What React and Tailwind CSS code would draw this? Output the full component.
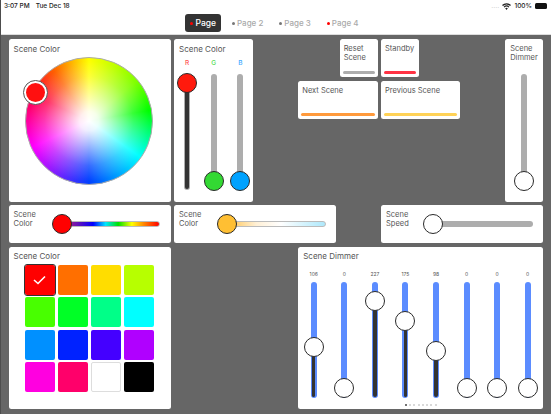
const font = "font-['Inter','Liberation_Sans',sans-serif]";

function Card({ className = "", children }) {
  return <div className={`bg-white rounded-[2.5px] text-[#555] min-w-0 ${className}`}>{children}</div>;
}

function VSlider({ fill, pos, thumb }) {
  return (
    <div className="relative h-[116px] w-[6px] rounded-full bg-[#adadad] flex justify-center">
      {fill ? <div className="absolute bottom-[1px] w-[4px] rounded-full bg-[#333]" style={{ height: 115 - pos }} /> : null}
      <div
        className="absolute left-1/2 -translate-x-1/2 -translate-y-1/2 w-[20px] h-[20px] rounded-full border-[1.5px] border-[#2a2a2a]"
        style={{ top: pos, background: thumb }}
      />
    </div>
  );
}

function HSlider({ label1, label2, track, thumb }) {
  return (
    <Card className="flex items-start pl-[5px] pr-[10.5px] pt-[4.5px]">
      <div className="w-[47px] shrink-0 text-[7.5px] leading-[9px]">
        {label1}
        <br />
        {label2}
      </div>
      <div className={`relative mt-[11.5px] flex-1 h-[6px] rounded-full ${track}`}>
        <div
          className="absolute left-[-10px] top-1/2 -translate-y-1/2 w-[20px] h-[20px] rounded-full border-[1.5px] border-[#2a2a2a]"
          style={{ background: thumb }}
        />
      </div>
    </Card>
  );
}

const swatches = [
  "#ff0000", "#ff6f00", "#ffdd00", "#b7ff00",
  "#48ff00", "#00ff26", "#00ff88", "#00ffff",
  "#0090ff", "#0022ff", "#4400ff", "#b000ff",
  "#ff00e0", "#ff006a", "#ffffff", "#000000",
];

const channels = [
  { v: 106, pos: 65 },
  { v: 0, pos: 106 },
  { v: 227, pos: 19.5 },
  { v: 175, pos: 39 },
  { v: 98, pos: 69 },
  { v: 0, pos: 106 },
  { v: 0, pos: 106 },
  { v: 0, pos: 106 },
];

function Tab({ dot, active, children }) {
  return (
    <div
      className={`flex items-center gap-[2px] h-[18px] px-[5px] rounded-[3px] font-medium ${
        active ? "bg-[#333] text-white text-[8.5px]" : "text-[#aaa] text-[8px]"
      }`}
    >
      <span className="w-[3px] h-[3px] rounded-full" style={{ background: dot }} />
      {children}
    </div>
  );
}

export default function App() {
  return (
    <div className={`w-[552px] h-[414px] overflow-hidden flex flex-col bg-[#666] border-l border-l-[#4d4d4d] border-r border-r-white ${font}`}>
      <header className="bg-white h-[35px] shrink-0 border-b border-b-[#ddd] relative flex justify-center">
        <div className="absolute left-[3px] top-[2px] flex gap-[6px] text-[6.5px] leading-[8px] font-medium text-[#222]">
          <span>3:07 PM</span>
          <span>Tue Dec 18</span>
        </div>
        <div className="absolute right-[4px] top-[2px] flex items-center gap-[3px] text-[6.5px] leading-[8px] font-medium text-[#222]">
          <span className="text-[#bbb] tracking-[0.5px] text-[5px]">....</span>
          <svg width="9" height="7" viewBox="0 0 12 9" fill="#222">
            <path d="M6 9 4.2 6.9a2.6 2.6 0 0 1 3.6 0ZM3.3 5.9 2.2 4.7a5.5 5.5 0 0 1 7.6 0L8.7 5.9a4 4 0 0 0-5.4 0ZM1.3 3.9 0 2.6a8.6 8.6 0 0 1 12 0l-1.3 1.3a7 7 0 0 0-9.4 0Z" />
          </svg>
          <span>100%</span>
          <span className="w-[12px] h-[6px] rounded-[1.5px] bg-[#111]" />
        </div>
        <div className="flex items-center gap-[6px] pt-[14px] h-[32px] ml-[-3px]">
          <Tab dot="#f00" active>Page</Tab>
          <Tab dot="#777">Page 2</Tab>
          <Tab dot="#777">Page 3</Tab>
          <Tab dot="#f00">Page 4</Tab>
        </div>
      </header>

      <main className="grid grid-cols-[repeat(13,38px)] grid-rows-[repeat(9,38px)] gap-x-[3.4px] gap-y-[3.5px] pl-[7.5px] pt-[4px]">
        <Card className="col-start-1 col-span-4 row-start-1 row-span-4 px-[5px] pt-[5px]">
          <div className="text-[8px] leading-[11px]">Scene Color</div>
          <div className="relative w-[128px] h-[128px] ml-[11.5px] mt-[2px]">
            <svg width="128" height="128" viewBox="0 0 128 128" className="block">
              <defs>
                <radialGradient id="wheelWhite" cx="50%" cy="50%" r="50%">
                  <stop offset="0%" stopColor="#fff" stopOpacity="1" />
                  <stop offset="15%" stopColor="#fff" stopOpacity="0.92" />
                  <stop offset="40%" stopColor="#fff" stopOpacity="0.6" />
                  <stop offset="70%" stopColor="#fff" stopOpacity="0.22" />
                  <stop offset="95%" stopColor="#fff" stopOpacity="0" />
                </radialGradient>
                <clipPath id="wheelClip">
                  <circle cx="64" cy="64" r="63.5" />
                </clipPath>
              </defs>
              <foreignObject x="0" y="0" width="128" height="128" clipPath="url(#wheelClip)">
                <div className="w-[128px] h-[128px] bg-[conic-gradient(#ffff00,#80ff00_50deg,#00ff00_80deg,#00ffff_125deg,#0040ff_180deg,#ff00ff_245deg,#ff0040_295deg,#ff6000_325deg,#ffff00)]" />
              </foreignObject>
              <circle cx="64" cy="64" r="63.5" fill="url(#wheelWhite)" stroke="#aaa" strokeWidth="1" />
            </svg>
            <div className="absolute left-[-2.5px] top-[23px] w-[25px] h-[25px] rounded-full bg-white border border-[#555] flex items-center justify-center">
              <div className="w-[19px] h-[19px] rounded-full bg-[#ff1010]" />
            </div>
          </div>
        </Card>

        <Card className="col-start-5 col-span-2 row-start-1 row-span-4 pt-[5px]">
          <div className="text-[8px] leading-[11px] px-[5px]">Scene Color</div>
          <div className="flex justify-between pl-[10px] pr-[10px] mt-[5px]">
            {[
              { l: "R", c: "#ff5555", pos: 9, fill: true, t: "#ff1a0d" },
              { l: "G", c: "#55dd55", pos: 107, t: "#33d933" },
              { l: "B", c: "#44aaff", pos: 107, t: "#00a2ff" },
            ].map((s) => (
              <div key={s.l} className="flex flex-col items-center w-[6px] gap-[7px]">
                <span className="text-[6.5px] leading-[7px] font-medium" style={{ color: s.c }}>{s.l}</span>
                <VSlider fill={s.fill} pos={s.pos} thumb={s.t} />
              </div>
            ))}
          </div>
        </Card>

        <Card className="col-start-9 row-start-1 flex flex-col justify-between px-[3px] pt-[5px] pb-[3px] text-[7.5px] leading-[9px]">
          <div className="pl-[1px]">Reset<br />Scene</div>
          <div className="h-[3px] rounded-full bg-[#adadad]" />
        </Card>
        <Card className="col-start-10 row-start-1 flex flex-col justify-between px-[3px] pt-[5px] pb-[3px] text-[7.5px] leading-[9px]">
          <div className="pl-[1px]">Standby</div>
          <div className="h-[3px] rounded-full bg-[#ff3344]" />
        </Card>
        <Card className="col-start-8 col-span-2 row-start-2 flex flex-col justify-between px-[3px] pt-[5px] pb-[3px] text-[7.5px] leading-[9px]">
          <div className="pl-[1px]">Next Scene</div>
          <div className="h-[3px] rounded-full bg-[#ff9a3c]" />
        </Card>
        <Card className="col-start-10 col-span-2 row-start-2 flex flex-col justify-between px-[3px] pt-[5px] pb-[3px] text-[7.5px] leading-[9px]">
          <div className="pl-[1px]">Previous Scene</div>
          <div className="h-[3px] rounded-full bg-[#ffd257]" />
        </Card>

        <Card className="col-start-13 row-start-1 row-span-4 pt-[5px] text-[7.5px] leading-[9px]">
          <div className="px-[5px]">Scene<br />Dimmer</div>
          <div className="flex justify-center mt-[12px]">
            <VSlider pos={107} thumb="#fff" />
          </div>
        </Card>

        <div className="col-start-1 col-span-4 row-start-5 grid">
          <HSlider label1="Scene" label2="Color" thumb="#ff0000" track="border border-[#bbb] bg-[linear-gradient(to_right,#c040c0,#8b1a9b_10%,#0000ff_32%,#00e5ff_45%,#00e000_58%,#ffff00_72%,#ff8000_85%,#ff0000)]" />
        </div>
        <div className="col-start-5 col-span-4 row-start-5 grid">
          <HSlider label1="Scene" label2="Color" thumb="#ffbf33" track="border border-[#bbb] bg-[linear-gradient(to_right,#ffc34d,#fff0d6_30%,#ffffff_55%,#aee8fb)]" />
        </div>
        <div className="col-start-10 col-span-4 row-start-5 grid">
          <HSlider label1="Scene" label2="Speed" thumb="#fff" track="bg-[#adadad]" />
        </div>

        <Card className="col-start-1 col-span-4 row-start-6 row-span-4 px-[5px] pt-[4px]">
          <div className="text-[8px] leading-[11px]">Scene Color</div>
          <div className="grid grid-cols-[repeat(4,30.5px)] grid-rows-[repeat(4,30px)] gap-x-[2.6px] gap-y-[2.6px] ml-[11px] mt-[3px]">
            {swatches.map((c, i) => (
              <div
                key={c}
                className={`rounded-[2px] flex items-center justify-center ${
                  i === 0 ? "outline outline-[1px] outline-[#333]" : ""
                } ${c === "#ffffff" ? "border border-[#ddd]" : ""}`}
                style={{ background: c }}
              >
                {i === 0 ? (
                  <svg width="13" height="10" viewBox="0 0 13 10" fill="none" stroke="#fff" strokeWidth="1.6">
                    <path d="M1 5l4 3.5L12 1.5" />
                  </svg>
                ) : null}
              </div>
            ))}
          </div>
        </Card>

        <Card className="col-start-8 col-span-6 row-start-6 row-span-4 pt-[4px] relative">
          <div className="text-[8px] leading-[11px] px-[5px]">Scene Dimmer</div>
          <div className="flex justify-between pl-[12.5px] pr-[12.5px] mt-[9px]">
            {channels.map((c, i) => (
              <div key={i} className="flex flex-col items-center w-[6px] gap-[5px]">
                <span className="text-[5px] leading-[6px]">{c.v}</span>
                <div className="relative h-[116px] w-[6px] rounded-full bg-[#5b8cff] flex justify-center">
                  <div className="absolute bottom-[1px] w-[3.5px] rounded-full bg-[#333]" style={{ height: 115 - c.pos }} />
                  <div
                    className="absolute left-1/2 -translate-x-1/2 -translate-y-1/2 w-[20px] h-[20px] rounded-full bg-white border-[1.5px] border-[#2a2a2a]"
                    style={{ top: c.pos }}
                  />
                </div>
              </div>
            ))}
          </div>
          <div className="flex justify-center gap-[2.3px] mt-[6px]">
            {[0, 1, 2, 3, 4, 5, 6, 7].map((i) => (
              <span key={i} className={`w-[2px] h-[2px] rounded-full ${i === 0 ? "bg-[#444]" : "bg-[#ccc]"}`} />
            ))}
          </div>
        </Card>
      </main>
    </div>
  );
}
